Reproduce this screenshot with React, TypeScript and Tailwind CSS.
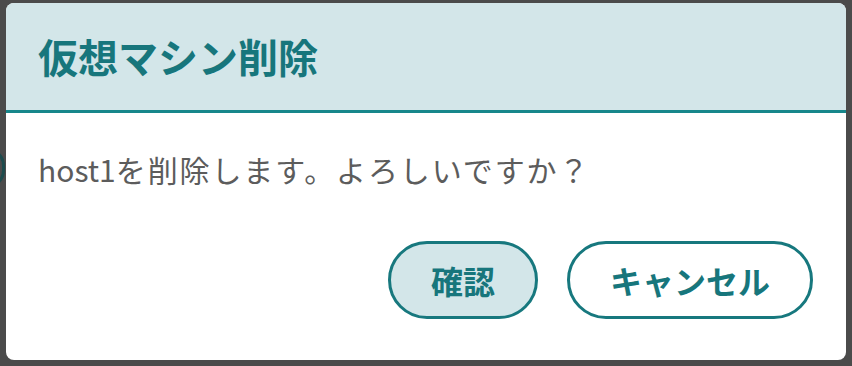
import React from "react";

export default function App() {
  const font = { fontFamily: '"Noto Sans CJK JP", "Noto Sans", sans-serif' };
  return (
    <div
      className="relative w-[852px] h-[366px] overflow-hidden bg-[#4b4b4b] pt-[3px] pl-[6px] pr-[6px] pb-[6px]"
      style={font}
    >
      <div className="absolute left-[-30px] top-[148px] w-[35px] h-[40px] rounded-full border-[3px] border-[#1d4b4d]" />
      <div className="relative flex flex-col w-[840px] h-[357px] rounded-[8px] bg-white overflow-hidden">
        <div className="flex items-center h-[110px] px-[32px] bg-[#d3e6e9] border-b-[3px] border-[#17878b]">
          <h1 className="text-[40px] leading-none font-bold text-[#17767c] pb-[2px]">仮想マシン削除</h1>
        </div>
        <div className="pl-[32px] pt-[34px] text-[30px] leading-[44px] text-[#5c5c5c]">
          host1<span className="tracking-[1.9px]">を削除します。よろしいですか？</span>
        </div>
        <div className="flex justify-end gap-[29px] pr-[33px] mt-[50px]">
          <button className="flex items-center justify-center w-[150px] h-[78px] rounded-full border-[3px] border-[#17787e] bg-[#d3e6e9] text-[32px] font-bold text-[#17767c]">
            確認
          </button>
          <button className="flex items-center justify-center w-[246px] h-[78px] rounded-full border-[3px] border-[#17787e] bg-white text-[32px] font-bold text-[#17767c]">
            キャンセル
          </button>
        </div>
      </div>
    </div>
  );
}
